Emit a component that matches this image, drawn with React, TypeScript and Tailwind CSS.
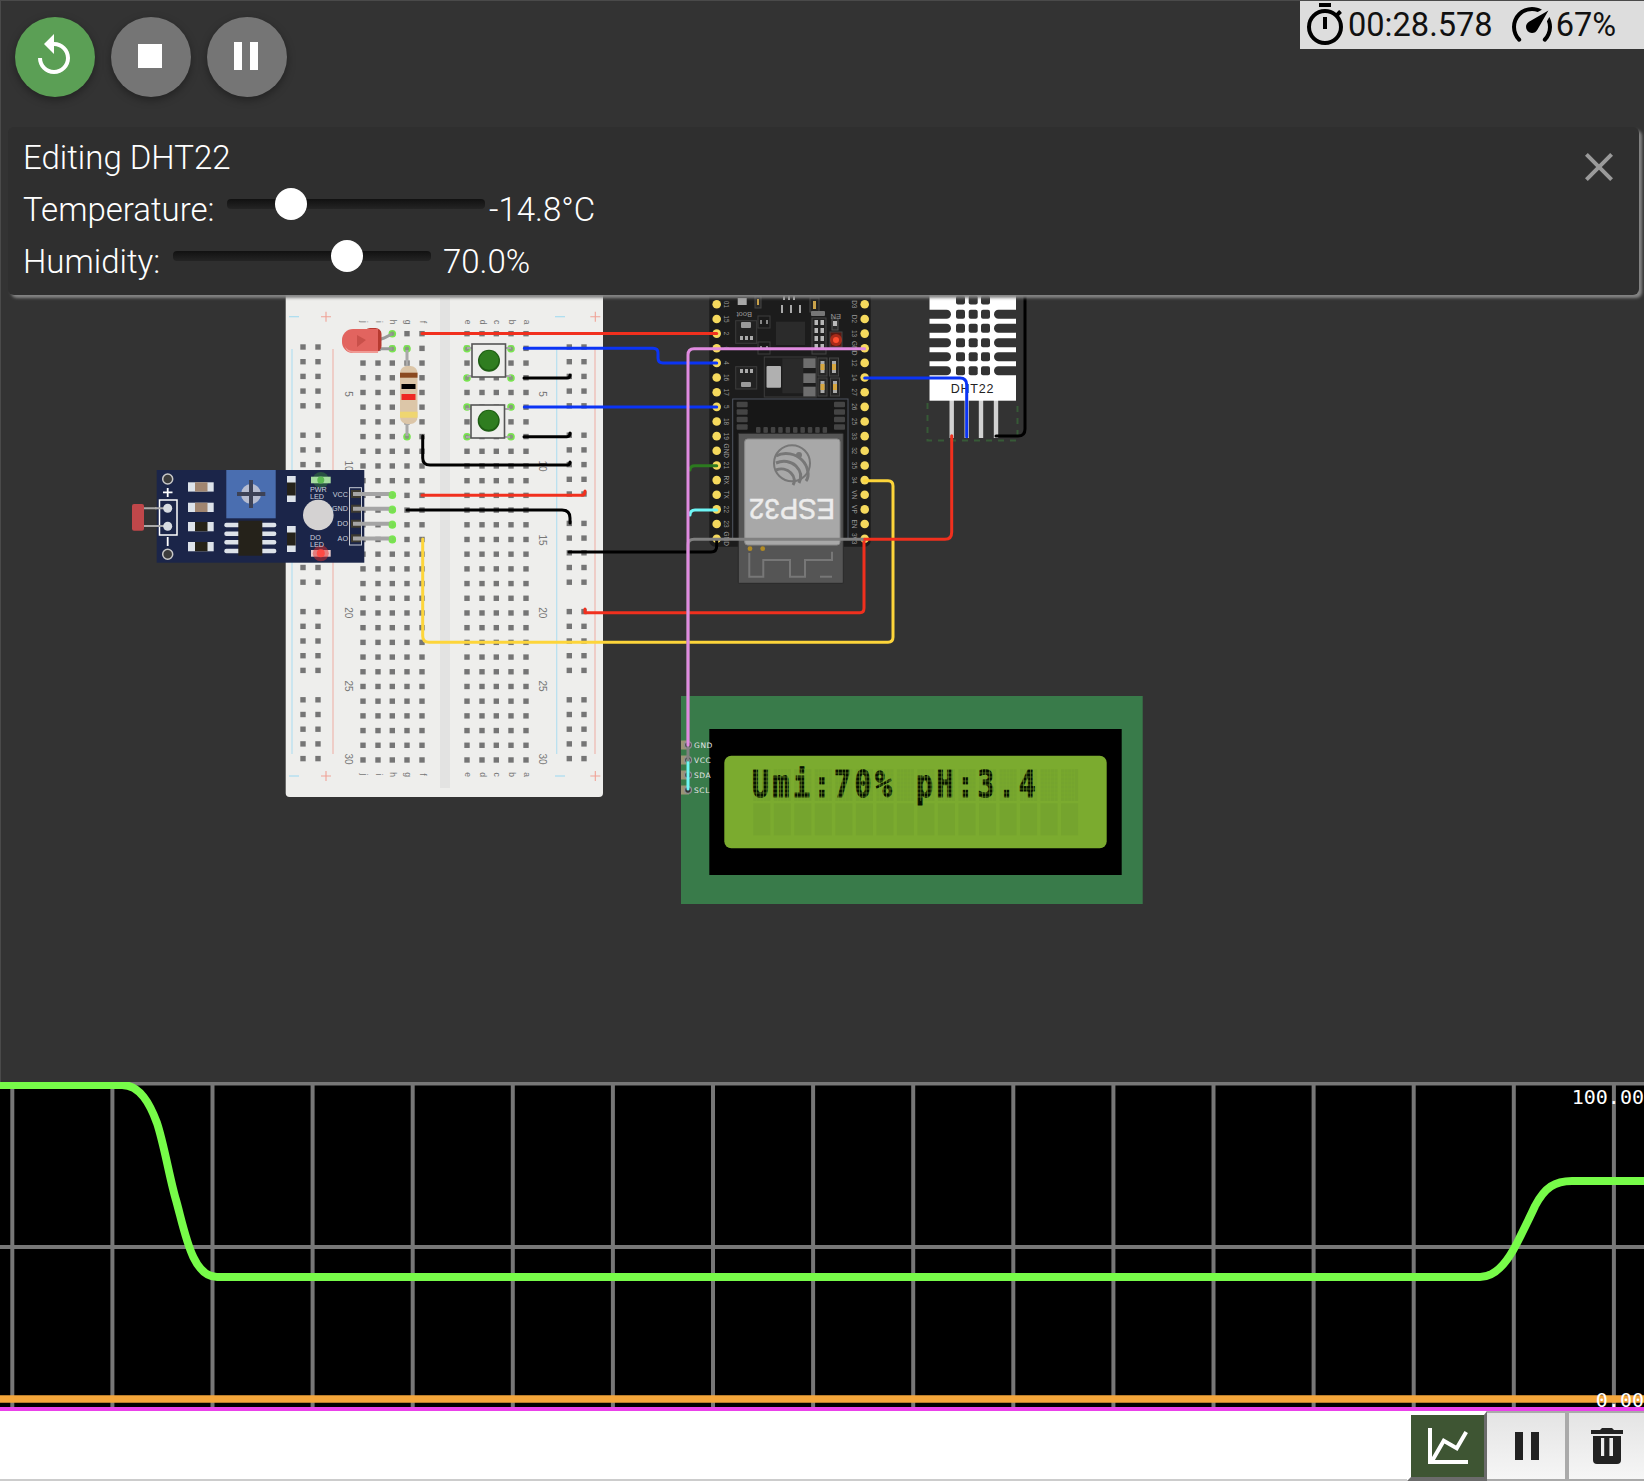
import React from "react";

const range = (n: number) => Array.from({ length: n }, (_, i) => i);
const rowY = (i: number) => 333.67 + i * 14.7;
const mainCols = [363, 378, 392.3, 407, 422, 467, 482, 496.3, 511, 526];
const railCols = [303, 318, 569.3, 584];
const railRows = range(5).flatMap((g) => range(5).map((i) => 347 + g * 88.2 + i * 14.7));
const letters = ["j", "i", "h", "g", "f", "e", "d", "c", "b", "a"];
const highlights: [number, number][] = [
  [392.3, 333.7], [392.3, 348.7], [407, 348.7], [407, 436.7],
  [467, 348.7], [511, 348.7], [467, 378], [511, 378],
  [467, 407], [511, 407], [467, 436.7], [511, 436.7],
  [392.3, 495.3], [392.3, 510], [392.3, 525], [392.3, 539.7],
];
const leftPins = ["01", "15", "2", "0", "4", "16", "17", "5", "18", "19", "GND", "21", "RX", "TX", "22", "23", "GND"];
const rightPins = ["D3", "D2", "13", "GND", "12", "14", "27", "26", "25", "33", "32", "35", "34", "VN", "VP", "EN", "3V3"];
const pinY = (i: number) => 304.3 + i * 14.65;

const Breadboard = () => (
  <g>
    <rect x={285.7} y={280} width={317.3} height={517} rx={4} fill="#eeeeec" />
    <rect x={440} y={298} width={10} height={490} fill="#e3e3e2" />
    {[[292, "#b5dff0"], [333, "#efb8ae"], [556.7, "#b5dff0"], [595, "#efb8ae"]].map(([x, c]) => (
      <rect key={String(x)} x={Number(x) - 0.6} y={349} width={1.2} height={405} fill={String(c)} />
    ))}
    {[316.7, 776].flatMap((y) => [
      <rect key={`a${y}`} x={289} y={y - 0.6} width={10} height={1.2} fill="#a9dcf0" />,
      <rect key={`b${y}`} x={555} y={y - 0.6} width={10} height={1.2} fill="#a9dcf0" />,
      <path key={`c${y}`} d={`M321 ${y}h10M326 ${y - 5}v10`} stroke="#f0a296" strokeWidth={1.1} />,
      <path key={`d${y}`} d={`M590.3 ${y}h10M595.3 ${y - 5}v10`} stroke="#f0a296" strokeWidth={1.1} />,
    ])}
    {range(30).flatMap((r) =>
      mainCols.map((x) => <rect key={`${r}-${x}`} x={x - 2.7} y={rowY(r) - 2.7} width={5.4} height={5.4} fill="#757575" />)
    )}
    {railRows.flatMap((y) =>
      railCols.map((x) => <rect key={`${y}-${x}`} x={x - 2.7} y={y - 2.7} width={5.4} height={5.4} fill="#757575" />)
    )}
    {mainCols.map((x, i) => (
      <g key={x} fill="#777" fontSize={8.5} fontFamily="Liberation Sans, sans-serif" textAnchor="middle">
        <text transform={`translate(${x - 2.5},322) rotate(90)`}>{letters[i]}</text>
        <text transform={`translate(${x - 2.5},774.5) rotate(90)`}>{letters[i]}</text>
      </g>
    ))}
    {[["5", 394], ["10", 466], ["15", 540], ["20", 612.7], ["25", 686], ["30", 759]].flatMap(([t, y]) =>
      [345, 538.5].map((x) => (
        <text key={`${t}-${x}`} transform={`translate(${x},${y}) rotate(90)`} fill="#777" fontSize={10} fontFamily="Liberation Sans, sans-serif" textAnchor="middle">
          {t}
        </text>
      ))
    )}
    {highlights.map(([x, y]) => (
      <g key={`${x}-${y}`}>
        <circle cx={x} cy={y} r={3.8} fill="#78e64e" />
        <circle cx={x} cy={y} r={2.2} fill="#8a9a80" />
      </g>
    ))}
  </g>
);

const Parts = () => (
  <g>
    {/* LED */}
    <path d="M378 340L384 338L392 334M378 348.7H392" fill="none" stroke="#999" strokeWidth={3} />
    <rect x={364} y={328} width={17.5} height={24} rx={6} fill="#b73a30" />
    <path d="M342 340a11 11 0 0 1 11-11h25v24h-25a11 11 0 0 1-11-11z" fill="#e2645f" />
    <path d="M345 346q2 5 9 5h24v2h-25q-7-1-8-7z" fill="#f09a94" />
    <path d="M357 335l9 5-9 7zM366 334v12" fill="#c9504a" />
    {/* Resistor */}
    <path d="M407 350V436" stroke="#a9a9a9" strokeWidth={3} />
    <rect x={400} y={366} width={17.5} height={58} rx={7} fill="#dcc6a8" />
    <rect x={400} y={372.7} width={17.5} height={5} fill="#8b4a1f" />
    <rect x={401.5} y={384} width={14} height={5} fill="#000" />
    <rect x={401.5} y={394} width={14} height={6} fill="#ee2a24" />
    <rect x={400} y={411.7} width={17.5} height={6} fill="#efd671" />
    {/* Pushbuttons */}
    {[[472, 344, 489, 360.7], [471, 405, 488.7, 420.7]].map(([x, y, cx, cy]) => (
      <g key={x}>
        <path d={`M${x - 5} ${y + 4}H${x + 39}M${x - 5} ${y + 32}H${x + 39}`} stroke="#aaa" strokeWidth={2} />
        <rect x={x} y={y} width={33.5} height={33} fill="#eeeeec" stroke="#555" strokeWidth={1.6} />
        <circle cx={cx} cy={cy} r={11} fill="#1f5e14" />
        <circle cx={cx} cy={cy - 0.5} r={9.6} fill="#2f7d20" />
      </g>
    ))}
    {/* LDR module */}
    <path d="M132 508.3H167M132 526H167" stroke="#aaa" strokeWidth={2} />
    <rect x={132} y={504} width={12} height={26.7} rx={2} fill="#c0474a" />
    <rect x={156.7} y={470} width={207.6} height={92.7} fill="#1b2549" />
    {[479, 554.3].map((y) => <circle key={y} cx={167.7} cy={y} r={5} fill="#3c3c3c" stroke="#c8c8c8" strokeWidth={1.5} />)}
    <path d="M163 492.3h9.5M167.7 488v9M167.7 537v9" stroke="#fff" strokeWidth={1.8} />
    <rect x={159.5} y={500} width={17.5} height={35} fill="none" stroke="#fff" strokeWidth={1.5} />
    <path d="M155 508.3H167M155 526H167" stroke="#aaa" strokeWidth={2} />
    {[508.3, 526.3].map((y) => <circle key={y} cx={167.7} cy={y} r={4.5} fill="#d8dce2" />)}
    {[[482.3, "#a08570"], [502.7, "#a08570"], [522, "#252218"], [542, "#252218"]].map(([y, c]) => (
      <g key={String(y)}>
        <rect x={188} y={Number(y)} width={25.7} height={9.3} fill="#dde3ea" />
        <rect x={195} y={Number(y)} width={12.5} height={9.3} fill={String(c)} />
      </g>
    ))}
    <rect x={226.3} y={470} width={49.4} height={48.3} fill="#4a6eb0" />
    <circle cx={251} cy={494} r={10} fill="#b7bdd0" />
    <path d="M237 494H265.3M251 480V508" stroke="#3d4256" strokeWidth={4} />
    {[525, 533.7, 542.3, 551].map((y) => (
      <g key={y} fill="#dde3ea">
        <rect x={224.3} y={y - 2.2} width={18} height={4.4} rx={2} />
        <rect x={258} y={y - 2.2} width={18.3} height={4.4} rx={2} />
      </g>
    ))}
    <rect x={238.3} y={520.7} width={24} height={35} fill="#25221a" />
    {[476, 526].map((y) => (
      <g key={y}>
        <rect x={287} y={y} width={8.7} height={26} fill="#dde3ea" />
        <rect x={287} y={y + 6.5} width={8.7} height={13} fill="#25221a" />
      </g>
    ))}
    <circle cx={320.8} cy={480} r={8} fill="#3a8a3a" opacity={0.45} />
    <rect x={311} y={476.7} width={19.7} height={6.6} fill="#a6dca0" />
    <circle cx={320.8} cy={480} r={3.5} fill="#5cba52" />
    <rect x={311} y={550} width={19.7} height={6.7} fill="#e8c8c8" />
    <circle cx={320.8} cy={553.3} r={8} fill="#e03030" opacity={0.5} />
    <circle cx={320.8} cy={553.3} r={4} fill="#ff4a44" />
    <circle cx={318.3} cy={515} r={15.3} fill="#d4d2d2" />
    <g fill="#cdd2de" fontSize={7.2} fontFamily="Liberation Sans, sans-serif">
      <text x={310} y={491.5}>PWR</text>
      <text x={310} y={498.5}>LED</text>
      <text x={310} y={539.5}>DO</text>
      <text x={310} y={546.8}>LED</text>
      <text x={348} y={496.5} textAnchor="end">VCC</text>
      <text x={348} y={511} textAnchor="end">GND</text>
      <text x={348} y={526} textAnchor="end">DO</text>
      <text x={348} y={541} textAnchor="end">AO</text>
    </g>
    {[494, 508.7, 523.7, 538.3].map((y) => <rect key={y} x={351} y={y - 4} width={10} height={8} fill="#3d3a30" />)}
    <rect x={349.5} y={487.7} width={12} height={57.3} fill="none" stroke="#c6cbd6" strokeWidth={1} />
    <path d="M353 494H392M353 508.7H392M353 523.7H392M353 538.4H392" stroke="#a5a5a5" strokeWidth={4} />
    {[495.3, 510, 525, 539.7].map((y) => <circle key={y} cx={392.3} cy={y - 0.8} r={3.6} fill="#78e64e" opacity={0.85} />)}
  </g>
);

const Esp32 = () => (
  <g>
    <rect x={709.3} y={280} width={161.4} height={266.7} rx={6} fill="#1c1c1c" />
    <rect x={732.7} y={399} width={115.3} height={140} fill="#171717" stroke="#4f5560" strokeWidth={1} />
    {[335, 358, 380, 403].flatMap((y) =>
      [200, 492].map((x) => <rect key={`${x}-${y}`} x={670 + x / 3} y={290 + y / 3} width={11} height={5.5} rx={1} fill="#444" />)
    )}
    {range(10).map((i) => <rect key={i} x={756 + i * 7.4} y={427} width={4.5} height={6} rx={1} fill="#444" />)}
    {/* Upper board components */}
    <rect x={737.7} y={298} width={9} height={7} fill="#a8a8a8" />
    <rect x={755} y={296} width={6} height={12} fill="#2a2a2a" stroke="#444" />
    <rect x={757} y={299} width={2} height={6} fill="#c9a24a" />
    <text transform="translate(752,312) rotate(180)" fill="#9a9a9a" fontSize={7.5} fontFamily="Liberation Sans, sans-serif">Boot</text>
    <rect x={735.7} y={320.7} width={21} height={22.6} fill="#222" stroke="#3c3c3c" />
    <rect x={741} y={322} width={10} height={6} rx={1} fill="#9a9a9a" />
    <path d="M740 338h3M745 338h3M750 338h3" stroke="#aaa" strokeWidth={4} />
    <rect x={758} y={316} width={12} height={12} fill="#1a1a1a" stroke="#3c3c3c" />
    <rect x={758} y={342} width={12} height={12} fill="#1a1a1a" stroke="#3c3c3c" />
    <path d="M761 320v4M767 320v4M761 346v4M767 346v4" stroke="#888" strokeWidth={2} />
    <rect x={776} y={321.7} width={29} height={23.3} fill="#2b2b2b" />
    <path d="M782 305v8M791 305v8M800 305v8M784 296v4M789 296v4M794 296v4" stroke="#aaa" strokeWidth={2} />
    <rect x={810} y={298} width={9} height={14} fill="#222" stroke="#444" />
    <rect x={813} y={301} width={3} height={8} fill="#c9a24a" />
    <rect x={811} y={311} width={14} height={5} rx={1} fill="#777" />
    <rect x={812} y={318} width={14} height={36} fill="#222" stroke="#444" />
    {range(4).flatMap((i) => [814.5, 820.5].map((x) => <rect key={`${i}-${x}`} x={x} y={320 + i * 8} width={3.5} height={5} fill="#b7b7b7" />))}
    <rect x={832} y={318} width={6} height={12} fill="#2a2a2a" stroke="#555" />
    <rect x={833} y={321} width={4} height={5} fill="#bbb" />
    <rect x={830} y={332} width={12} height={15} fill="#5a1a12" stroke="#444" />
    <circle cx={836} cy={340} r={6} fill="#e83a20" opacity={0.55} />
    <circle cx={836} cy={340} r={3} fill="#ff4e30" />
    <text transform="translate(841,314) rotate(180)" fill="#9a9a9a" fontSize={7.5} fontFamily="Liberation Sans, sans-serif">EN</text>
    {/* Regulator */}
    <rect x={764.3} y={357} width={52} height={40} fill="#1d1d1d" stroke="#3c3c3c" />
    <rect x={766.5} y={366} width={14.5} height={21.7} rx={1} fill="#b0b0b0" />
    <rect x={782.3} y={358.3} width={21} height={35} fill="#2a2a2a" />
    {[358.3, 373.3, 386.7].map((y) => <rect key={y} x={803.3} y={y} width={12.3} height={9.7} fill="#6e6e6e" />)}
    <rect x={735.7} y={366.7} width={21} height={22.3} fill="#222" stroke="#3c3c3c" />
    <rect x={741} y={382} width={10} height={5} rx={1} fill="#9a9a9a" />
    <path d="M740 371h3M745 371h3M750 371h3" stroke="#aaa" strokeWidth={4} />
    {[[818, 358], [829.5, 358], [818, 378], [830.5, 378]].map(([x, y]) => (
      <g key={`${x}-${y}`}>
        <rect x={x} y={y} width={9} height={18} fill="#262626" stroke="#444" />
        <rect x={x + 2.5} y={y + 3} width={4} height={12} fill="#aaa" />
        <rect x={x + 2.5} y={y + 6} width={4} height={6} fill="#d6a640" />
      </g>
    ))}
    {/* Module */}
    <rect x={738.3} y={433.3} width={105} height={150} rx={1} fill="#555" stroke="#2a2a2a" strokeWidth={1} />
    <rect x={744.7} y={439} width={95.3} height={106} rx={3} fill="#a8a8a8" stroke="#8a8a8a" />
    <g fill="none" stroke="#777">
      <circle cx={792} cy={463.3} r={18} strokeWidth={2} />
      <path d="M776 456c9-5 20-2 26 4s8 16 4 21M776 463c7-3 15-2 20 3s6 11 3 17M776 470c5-2 11-1 15 3s4 9 2 12" strokeWidth={3} />
    </g>
    <circle cx={799} cy={455} r={3} fill="#777" />
    <text transform="translate(792,509) rotate(180)" y={10.5} textAnchor="middle" textLength={86} lengthAdjust="spacingAndGlyphs" fill="#ececec" stroke="#ececec" strokeWidth={0.5} fontSize={29} fontFamily="Liberation Sans, sans-serif">ESP32</text>
    <circle cx={750} cy={548.7} r={2.4} fill="#b08a24" />
    <circle cx={762.7} cy={548.7} r={2.4} fill="#b08a24" />
    <path d="M749.3 553V576.7H763.3V560H790V576.7H805V560H832V551.7" fill="none" stroke="#777" strokeWidth={2} />
    <path d="M832 576.7H820" fill="none" stroke="#777" strokeWidth={2} />
    {/* Pins */}
    {range(17).map((i) => (
      <g key={i}>
        <circle cx={716.7} cy={pinY(i)} r={4.3} fill="#f5d95d" />
        <circle cx={864.7} cy={pinY(i)} r={4.3} fill="#f5d95d" />
        <text transform={`translate(723.5,${pinY(i)}) rotate(90)`} fill="#9a9a9a" fontSize={6.5} fontFamily="Liberation Sans, sans-serif" textAnchor="middle">{leftPins[i]}</text>
        <text transform={`translate(852,${pinY(i)}) rotate(90)`} fill="#9a9a9a" fontSize={6.5} fontFamily="Liberation Sans, sans-serif" textAnchor="middle">{rightPins[i]}</text>
      </g>
    ))}
  </g>
);

const Dht = () => (
  <g>
    <rect x={927.5} y={280} width={90} height={160.5} fill="none" stroke="#375a37" strokeWidth={2} strokeDasharray="6 6" />
    {[951.7, 966.7, 981, 996].map((x) => <rect key={x} x={x - 2.2} y={400} width={4.4} height={38} fill="#d2d2d2" />)}
    <rect x={929.3} y={280} width={86.7} height={120.7} fill="#fff" />
    {[300, 314.3, 328.3, 342.7, 356.7, 370.7].map((y) => (
      <g key={y} fill="#333">
        {y !== 300 && <rect x={925} y={y - 4.5} width={26} height={9} rx={4.5} />}
        {y !== 300 && <rect x={994} y={y - 4.5} width={26} height={9} rx={4.5} />}
        {[956, 968.7, 981].map((x) => <rect key={x} x={x} y={y - 4.5} width={9} height={9} rx={2} />)}
      </g>
    ))}
    <rect x={925} y={280} width={4.3} height={121} fill="#333" />
    <rect x={1016} y={280} width={5} height={121} fill="#333" />
    <text x={972.5} y={393} textAnchor="middle" fill="#222" fontSize={12.5} letterSpacing={0.8} fontFamily="Liberation Sans, sans-serif">DHT22</text>
  </g>
);

const Lcd = () => {
  const cells = range(16).map((i) => 753.3 + i * 20.52);
  const label = "Umi:70% pH:3.4";
  return (
    <g>
      <rect x={681} y={696} width={461.7} height={208} fill="#397b4a" />
      <rect x={709.3} y={729} width={412.4} height={146} fill="#000" />
      <rect x={724.3} y={755.7} width={382.4} height={92.6} rx={7} fill="#7bab2f" />
      {cells.flatMap((x) =>
        [769, 803.3].map((y) => <rect key={`${x}-${y}`} x={x} y={y} width={17} height={32} fill="#75a42e" />)
      )}
      <text
        transform="translate(0,797) scale(0.74,1)"
        x={label.split("").map((_, i) => (cells[i] - 1.4) / 0.74).join(" ")}
        fontSize={38}
        fontWeight={700}
        fill="#061000"
        stroke="#061000"
        strokeWidth={0.9}
        fontFamily="DejaVu Sans Mono, monospace"
        xmlSpace="preserve"
      >
        {label}
      </text>
      {cells.flatMap((x) =>
        range(4).map((k) => <rect key={`v${x}-${k}`} x={x + 3.4 * (k + 1) - 0.25} y={769} width={0.5} height={32} fill="#7bab2f" />)
      )}
      {range(8).map((k) => <rect key={k} x={753} y={769 + 4 * k - 0.25} width={322} height={0.5} fill="#7bab2f" />)}
      {[745, 760, 775, 790].map((y, i) => (
        <g key={y}>
          <rect x={681} y={y - 4.5} width={8} height={9} fill="#9b9475" />
          <circle cx={688} cy={y} r={3.4} fill="#333" stroke="#8f8f8f" strokeWidth={1.4} />
          <text x={694} y={y + 3} fill="#e6e6e6" fontSize={7.5} letterSpacing={0.6} fontFamily="DejaVu Sans, sans-serif">{["GND", "VCC", "SDA", "SCL"][i]}</text>
        </g>
      ))}
    </g>
  );
};

const wires: [string, string][] = [
  ["M422 333.5H716.7", "#f1301e"],
  ["M524.3 348.3H653Q658 348.3 658 353V358Q658 363 663 363H716.7", "#0b34f5"],
  ["M524.3 407H716.7", "#0b34f5"],
  ["M524 378H567Q570 378 570 375", "#000"],
  ["M524 436.7H567Q570 436.7 570 433", "#000"],
  ["M422.7 436V458Q422.7 465 430 465H567Q570 465 570 462", "#000"],
  ["M422 495.3H582Q585 495.3 585 491", "#f1301e"],
  ["M407 510H562Q570 510 570 518V523", "#000"],
  ["M569 552H711Q716.7 552 716.7 546V540", "#000"],
  ["M585 609V612.7H860Q864 612.7 864 608V540", "#f1301e"],
  ["M422.7 539V636Q422.7 642.3 429 642.3H888Q893 642.3 893 637V486Q893 480.7 888 480.7H864.7", "#fdd53a"],
  ["M716.7 465.7H695Q690 465.7 690 470", "#2c7a1f"],
  ["M716.7 510H695Q690 510 690 515", "#6ef6f6"],
  ["M688 760V775", "#2c7a1f"],
  ["M688 760V789", "#6ef6f6"],
  ["M864.7 539.3H694Q688 539.3 688 545V760", "#808080"],
  ["M864.7 348.7H694Q688 348.7 688 355V745", "#e08be0"],
  ["M864.7 378H960Q966.7 378 966.7 385V436.7", "#0b34f5"],
  ["M864.7 539.3H945Q951.7 539.3 951.7 532V435.7", "#f1301e"],
  ["M996 436H1018Q1025 436 1025 429V280", "#000"],
];

const Diagram = () => (
  <svg className="absolute left-[-1px] top-[-1px]" width={1644} height={1082} viewBox="0 0 1644 1082">
    <Breadboard />
    <Esp32 />
    <Dht />
    <Lcd />
    <g fill="none" strokeWidth={3} strokeLinecap="round" strokeLinejoin="round">
      {wires.map(([d, c]) => <path key={d + c} d={d} stroke={c} />)}
    </g>
    <Parts />
  </svg>
);

const Plot = () => (
  <div className="relative h-[329px] bg-black">
    <svg className="absolute left-0 top-0" width={1644} height={329} viewBox="0 0 1644 329">
      <g stroke="#777777" strokeWidth={4}>
        {range(17).map((i) => <path key={i} d={`M${12.3 + i * 100.1} 0V326`} />)}
        <path d="M0 1.5H1644M0 165H1644" />
      </g>
      <path d="M0 317H1644" stroke="#f4a63a" strokeWidth={7.5} />
      <path d="M0 327H1644" stroke="#ea41e9" strokeWidth={4} />
      <path
        d="M0 3L122 3C140 3 150 22 157 41C164 62 170 98 176 118C185 150 192 195 217 195H1480C1497 195 1510 175 1517 161C1525 145 1530 135 1535 124C1545 105 1555 99 1572 99H1644"
        fill="none"
        stroke="#77fb49"
        strokeWidth={8}
      />
      <g fill="#fff" fontSize={20} fontFamily="DejaVu Sans Mono, monospace" textAnchor="end">
        <text x={1644} y={22}>100.00</text>
        <text x={1644} y={325}>0.00</text>
      </g>
    </svg>
  </div>
);

const Fab = ({ green, d }: { green?: boolean; d: string }) => (
  <button className={`flex h-20 w-20 items-center justify-center rounded-full shadow-[0_3px_8px_rgba(0,0,0,0.35)] ${green ? "bg-[#5b9f55]" : "bg-[#757575]"}`}>
    <svg className="-translate-x-px -translate-y-px" width={48} height={48} viewBox="0 0 24 24" fill="#fff"><path d={d} /></svg>
  </button>
);

const Row = ({ label, labelW, thumb, value, valueGap }: { label: string; labelW: string; thumb: string; value: string; valueGap: string }) => (
  <div className="flex h-[52px] items-center">
    <span className={labelW}>{label}</span>
    <div className="relative h-[10px] w-[258px] -translate-y-[6px] rounded bg-gradient-to-b from-[#111111] to-[#242424]">
      <div className={`absolute top-[-11px] h-8 w-8 rounded-full bg-white ${thumb}`} />
    </div>
    <span className={valueGap}>{value}</span>
  </div>
);

export default function App() {
  return (
    <div className="flex h-[1481px] w-[1644px] flex-col overflow-hidden bg-white font-[Roboto,sans-serif]">
      <div className="relative h-[1082px] overflow-hidden border-l border-t border-[#4a4a4a] bg-[#333333]">
        <Diagram />
        <div className="relative flex gap-4 pl-[14px] pt-4">
          <Fab green d="M12 5V1L7 6l5 5V7c3.31 0 6 2.69 6 6s-2.69 6-6 6-6-2.69-6-6H4c0 4.42 3.58 8 8 8s8-3.58 8-8-3.58-8-8-8z" />
          <Fab d="M6 6h12v12H6z" />
          <Fab d="M6 19h4V5H6v14zm8-14v14h4V5h-4z" />
        </div>
        <div className="relative ml-[7px] mr-[5px] mt-[30px] h-[168px] rounded-md bg-[#2f2f2f] px-[15px] pt-[5px] text-[33px] font-light leading-[52px] text-white shadow-[3px_3px_3px_#858585]">
          <div className="h-[52px]">Editing DHT22</div>
          <Row label="Temperature:" labelW="w-[204px]" thumb="left-[48px]" value="-14.8°C" valueGap="ml-1" />
          <Row label="Humidity:" labelW="w-[150px]" thumb="left-[158px]" value="70.0%" valueGap="ml-[12px]" />
          <svg className="absolute right-4 top-4" width={48} height={48} viewBox="0 0 24 24" fill="#9a9a9a">
            <path d="M19 6.41L17.59 5 12 10.59 6.41 5 5 6.41 10.59 12 5 17.59 6.41 19 12 13.41 17.59 19 19 17.59 13.41 12z" />
          </svg>
        </div>
        <div className="absolute right-0 top-0 flex h-12 w-[344px] items-center bg-[#dddddd] pl-[1px] text-[32.6px] leading-none text-[#111111]">
          <svg className="-mr-px" width={48} height={48} viewBox="0 0 24 24" fill="#000">
            <path d="M12,20A7,7 0 0,1 5,13A7,7 0 0,1 12,6A7,7 0 0,1 19,13A7,7 0 0,1 12,20M19.03,7.39L20.45,5.97C20,5.46 19.55,5 19.04,4.56L17.62,6C16.07,4.74 14.12,4 12,4A9,9 0 0,0 3,13A9,9 0 0,0 12,22C17,22 21,17.97 21,13C21,10.88 20.26,8.93 19.03,7.39M11,14H13V8H11M15,1H9V3H15V1Z" />
          </svg>
          <span>00:28.578</span>
          <svg className="ml-[15px]" width={48} height={48} viewBox="0 0 24 24" fill="#000">
            <path d="M12,16A3,3 0 0,1 9,13C9,11.88 9.61,10.9 10.5,10.39L20.21,4.77L14.68,14.35C14.18,15.33 13.17,16 12,16M12,3C13.81,3 15.5,3.5 16.97,4.32L14.87,5.53C14,5.19 13,5 12,5A8,8 0 0,0 4,13C4,15.21 4.89,17.21 6.34,18.65H6.35C6.74,19.04 6.74,19.67 6.35,20.06C5.96,20.45 5.32,20.45 4.93,20.07V20.07C3.12,18.26 2,15.76 2,13A10,10 0 0,1 12,3M22,13C22,15.76 20.88,18.26 19.07,20.07V20.07C18.68,20.45 18.05,20.45 17.66,20.06C17.27,19.67 17.27,19.04 17.66,18.65V18.65C19.11,17.2 20,15.21 20,13C20,12 19.81,11 19.46,10.1L20.67,8C21.5,9.5 22,11.18 22,13Z" />
          </svg>
          <span>67%</span>
        </div>
      </div>
      <Plot />
      <div className="flex h-[70px]">
        <div className="flex-1 border-b-2 border-[#cccccc] bg-white" />
        <button className="flex w-[80px] items-center justify-center border-y-4 border-l-4 border-r-[3px] border-b-[#6b6b6b] border-l-white border-r-[#6b6b6b] border-t-white bg-[#3e5533]">
          <svg width={48} height={48} viewBox="0 0 24 24" fill="#fff"><path d="M16,11.78L20.24,4.45L21.97,5.45L16.74,14.5L10.23,10.75L5.46,19H22V21H2V3H4V17.54L9.5,8L16,11.78Z" /></svg>
        </button>
        <button className="flex w-[82px] items-center justify-center border-y-2 border-r-4 border-[#aaaaaa] bg-gradient-to-b from-[#e4e4e4] to-[#f6f6f6] pl-[2px]">
          <svg width={48} height={48} viewBox="0 0 24 24" fill="#222"><path d="M6 19h4V5H6v14zm8-14v14h4V5h-4z" /></svg>
        </button>
        <button className="flex w-[75px] items-center justify-center border-y-2 border-[#aaaaaa] bg-gradient-to-b from-[#e4e4e4] to-[#f6f6f6]">
          <svg width={48} height={48} viewBox="0 0 24 24" fill="#222">
            <path fillRule="evenodd" d="M19 4h-3.5l-1-1h-5l-1 1H4v2h16V4zM5 7v12a2 2 0 0 0 2 2h10a2 2 0 0 0 2-2V7H5zm4 1h1.6v9H9zm4.2 0H15v9h-1.8z" />
          </svg>
        </button>
      </div>
    </div>
  );
}
